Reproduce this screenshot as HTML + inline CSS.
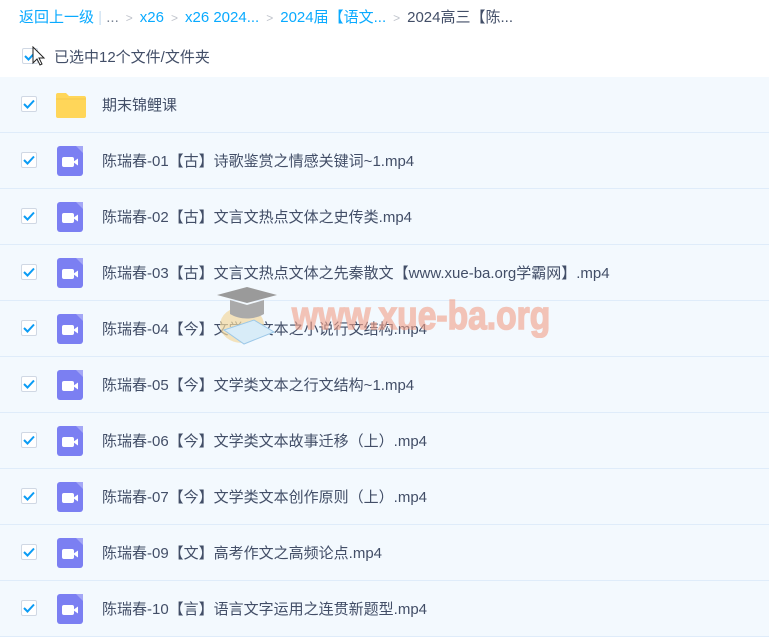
<!DOCTYPE html>
<html><head><meta charset="utf-8"><style>
body{margin:0;width:769px;height:632px;overflow:hidden;background:#fff;font-family:"Liberation Sans","Noto Sans CJK SC",sans-serif;position:relative}
.bc{position:absolute;left:19px;top:6px;font-size:15px;color:#09aaff;white-space:nowrap}
.bc .s{color:#c0c4cc;margin:0 7px;font-size:12px}
.bc .g{color:#424e67}
.sel{position:absolute;left:22px;top:46px;font-size:15px;color:#424e67}
.cb{position:absolute;width:14px;height:14px;border:1px solid #d0d8e4;border-radius:2px;background:#fff}
.cb svg{position:absolute;left:1px;top:2px}
.row{position:absolute;left:0;width:769px;height:55px;background:#f3f9fe;border-bottom:1px solid #dfecfa}
.row .cb{left:21px;top:19px}
.row .t{position:absolute;left:102px;top:17px;font-size:15px;color:#424e67;white-space:nowrap}
.vid{position:absolute;left:57px;top:13px;width:26px;height:30px;background:#7b7ff2;border-radius:3px}
.fold{position:absolute;left:55px;top:15px;width:32px;height:26px}
</style></head><body>
<div class="bc">返回上一级 <span style="color:#c8ddf0">|</span> <span class="g" style="color:#7a8494">...</span><span class="s">&gt;</span>x26<span class="s">&gt;</span>x26 2024...<span class="s">&gt;</span>2024届【语文...<span class="s">&gt;</span><span class="g">2024高三【陈...</span></div>
<div class="cb" style="left:22px;top:48px"><svg width="12" height="10"><path d="M1 5l3.5 3.5L11 1.5" stroke="#0a9cf5" stroke-width="2" fill="none"/></svg></div>
<svg style="position:absolute;left:32px;top:46px" width="14" height="22"><path d="M1 1v16l4-4 3 6 2-1-3-6h5z" fill="#fff" stroke="#222" stroke-width="1"/></svg>
<div class="sel" style="left:54px">已选中12个文件/文件夹</div>
<div id="rows"></div>
<script>
var t=["期末锦鲤课","陈瑞春-01【古】诗歌鉴赏之情感关键词~1.mp4","陈瑞春-02【古】文言文热点文体之史传类.mp4","陈瑞春-03【古】文言文热点文体之先秦散文【www.xue-ba.org学霸网】.mp4","陈瑞春-04【今】文学类文本之小说行文结构.mp4","陈瑞春-05【今】文学类文本之行文结构~1.mp4","陈瑞春-06【今】文学类文本故事迁移（上）.mp4","陈瑞春-07【今】文学类文本创作原则（上）.mp4","陈瑞春-09【文】高考作文之高频论点.mp4","陈瑞春-10【言】语言文字运用之连贯新题型.mp4"];
var h="";
t.forEach(function(s,i){
var ic=i==0?'<svg class="fold" viewBox="0 0 32 26"><path d="M1 3a2 2 0 0 1 2-2h8l3 3h15a2 2 0 0 1 2 2v18a2 2 0 0 1-2 2H3a2 2 0 0 1-2-2z" fill="#ffd659"/><path d="M1 7h30" stroke="#f5c84a"/></svg>':'<div class="vid"><svg width="26" height="30" viewBox="0 0 26 30"><path d="M19 0h7v7z" fill="#a4a7f6"/><rect x="5" y="11" width="12" height="10" rx="2" fill="#fff"/><path d="M16 16l5-3.5v7z" fill="#fff"/></svg></div>';
h+='<div class="row" style="top:'+(77+i*56)+'px"><div class="cb"><svg width="12" height="10"><path d="M1 5l3.5 3.5L11 1.5" stroke="#0a9cf5" stroke-width="2" fill="none"/></svg></div>'+ic+'<div class="t">'+s+'</div></div>';
});
document.getElementById("rows").innerHTML=h;
</script>
<svg style="position:absolute;left:212px;top:280px" width="80" height="72"><ellipse cx="30" cy="45" rx="22" ry="18" fill="#f2d9a0" opacity=".7"/><path d="M12 50l30-10 20 12-30 12z" fill="#d8ecf8" stroke="#9cc8e8"/><path d="M5 15l30-8 30 8-30 8z" fill="#9a9a9a"/><path d="M18 20v14c10 6 24 6 34 0V20l-17 5z" fill="#aaa"/></svg>
<div style="position:absolute;left:292px;top:294px;font:bold 40px 'Liberation Sans',sans-serif;color:#f2a088;opacity:.6;transform:scaleX(.84);transform-origin:left top;white-space:nowrap;-webkit-text-stroke:1.5px #f2a088">www.xue-ba.org</div>
</body></html>
